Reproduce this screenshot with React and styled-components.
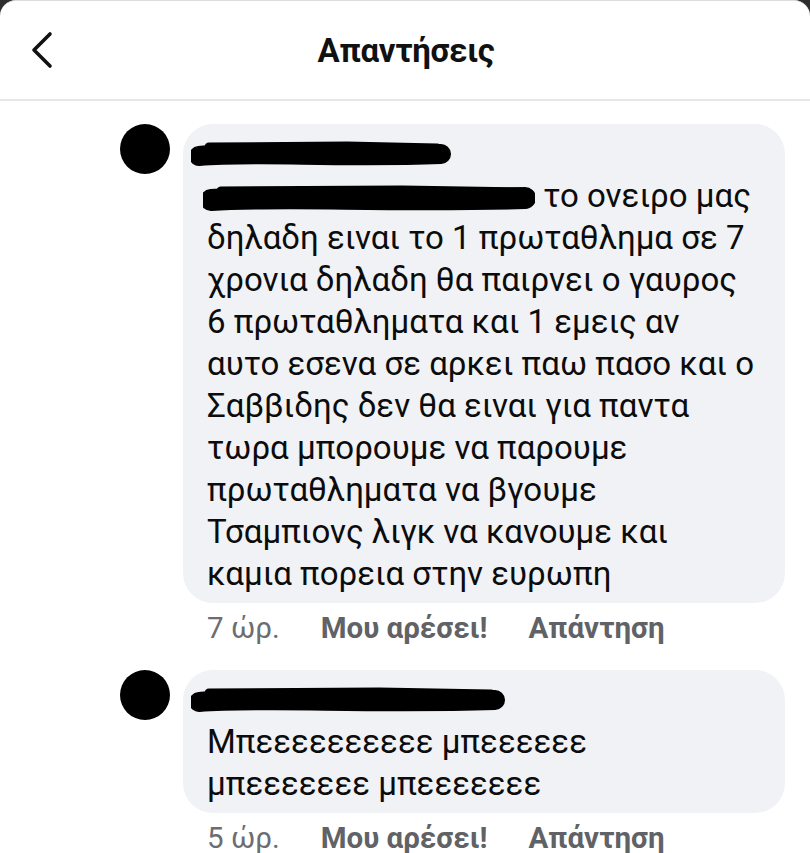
import React from 'react';
import styled, { createGlobalStyle } from 'styled-components';

const GlobalStyle = createGlobalStyle`
  html, body {
    margin: 0;
    padding: 0;
    background: #2e2e2e;
    font-family: Roboto, "Noto Sans", Arial, sans-serif;
  }
`;

const comments = [
  {
    id: 1,
    nameWidth: 260,
    mention: 332,
    lines: [
      'το ονειρο μας',
      'δηλαδη ειναι το 1 πρωταθλημα σε 7',
      'χρονια δηλαδη θα παιρνει ο γαυρος',
      '6 πρωταθληματα και 1 εμεις αν',
      'αυτο εσενα σε αρκει παω πασο και ο',
      'Σαββιδης δεν θα ειναι για παντα',
      'τωρα μπορουμε να παρουμε',
      'πρωταθληματα να βγουμε',
      'Τσαμπιονς λιγκ να κανουμε και',
      'καμια πορεια στην ευρωπη',
    ],
    time: '7 ώρ.',
  },
  {
    id: 2,
    nameWidth: 314,
    lines: ['Μπεεεεεεεεεε μπεεεεεε', 'μπεεεεεεε μπεεεεεεε'],
    time: '5 ώρ.',
  },
];

// redaction marker drawn over the names
const Scribble = ({ width, height = 32 }) => (
  <ScribbleSvg width={width} height={height} viewBox={`0 0 ${width} ${height}`}>
    <path
      d={`M8 ${height / 2 + 2} C ${width * 0.25} ${height / 2 - 3}, ${width * 0.55} ${height / 2 + 4}, ${width - 10} ${height / 2}`}
      stroke="#000"
      strokeWidth={height - 12}
      strokeLinecap="round"
      fill="none"
    />
    <path
      d={`M18 ${height / 2 - 7} L ${width * 0.6} ${height / 2 - 8} L ${width - 14} ${height / 2 - 6}`}
      stroke="#000"
      strokeWidth="9"
      strokeLinecap="round"
      fill="none"
    />
    <path
      d={`M4 ${height / 2 + 3} L 30 ${height / 2 + 2}`}
      stroke="#000"
      strokeWidth="6"
      strokeLinecap="round"
    />
  </ScribbleSvg>
);

const App = () => {
  return (
    <>
      <GlobalStyle />
      <Sheet>
        <Header>
          <BackButton>
            <svg width="26" height="40" viewBox="0 0 26 40">
              <path d="M20 4 L4 20 L20 36" stroke="#111" strokeWidth="3.6" fill="none" strokeLinecap="round" strokeLinejoin="round" />
            </svg>
          </BackButton>
          <Title>Απαντήσεις</Title>
        </Header>
        <List>
          {comments.map((c) => (
            <Comment key={c.id}>
              <Avatar />
              <Body>
                <Bubble>
                  <NameLine>
                    <Scribble width={c.nameWidth} />
                  </NameLine>
                  {c.lines.map((line, i) => (
                    <TextLine key={i}>
                      {i === 0 && c.mention && (
                        <Scribble width={c.mention} height={34} />
                      )}
                      {i === 0 && c.mention ? ' ' + line : line}
                    </TextLine>
                  ))}
                </Bubble>
                <Meta>
                  <Time>{c.time}</Time>
                  <Action>Μου αρέσει!</Action>
                  <Action>Απάντηση</Action>
                </Meta>
              </Body>
            </Comment>
          ))}
        </List>
      </Sheet>
    </>
  );
};

export default App;

const Sheet = styled.div`
  background: #fff;
  border-radius: 16px 16px 0 0;
  min-height: 853px;
  border-top: 1px solid #ddd;
  box-sizing: border-box;
`;

const Header = styled.div`
  position: relative;
  height: 98px;
  display: flex;
  align-items: center;
  justify-content: center;
  border-bottom: 2px solid #e6e6e8;
`;

const BackButton = styled.div`
  position: absolute;
  left: 30px;
  top: 29px;
  display: flex;
`;

const Title = styled.div`
  font-size: 33px;
  font-weight: 700;
  color: #111;
  letter-spacing: -0.3px;
  margin-left: 2px;
`;

const List = styled.div`
  display: flex;
  flex-direction: column;
  gap: 24px;
  padding: 23px 25px 0 120px;
`;

const Comment = styled.div`
  display: flex;
  align-items: flex-start;
  gap: 13px;
`;

const Avatar = styled.div`
  width: 50px;
  height: 50px;
  border-radius: 50%;
  background: #000;
  flex-shrink: 0;
`;

const Body = styled.div`
  flex: 1;
  display: flex;
  flex-direction: column;
`;

const Bubble = styled.div`
  background: #f0f2f5;
  border-radius: 30px;
  padding: 9px 20px 8px 24px;
  color: #0c0c0c;
  font-size: 33px;
  line-height: 42px;
`;

const NameLine = styled.div`
  height: 42px;
  display: flex;
  align-items: center;
  margin-left: -12px;
`;

const TextLine = styled.div`
  white-space: nowrap;
`;

const ScribbleSvg = styled.svg`
  display: inline-block;
  vertical-align: middle;
  margin-left: -4px;
`;

const Meta = styled.div`
  display: flex;
  gap: 41px;
  padding: 7px 0 0 24px;
  font-size: 29.5px;
  line-height: 36px;
`;

const Time = styled.span`
  color: #6b6d71;
`;

const Action = styled.span`
  color: #606266;
  font-weight: 700;
`;
